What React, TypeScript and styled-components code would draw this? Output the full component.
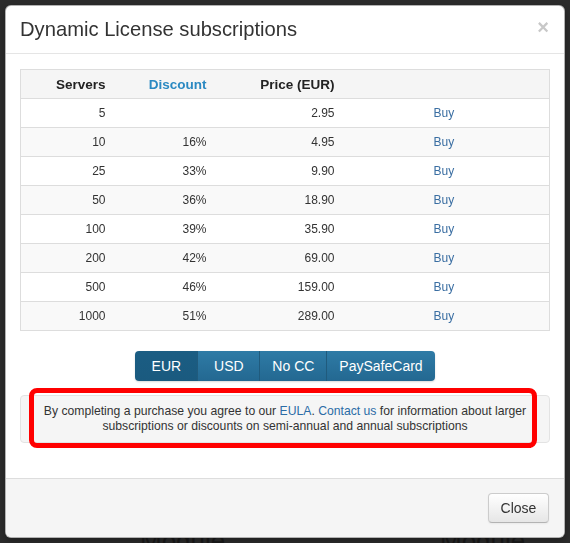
import React from "react";
import styled, { createGlobalStyle, css } from "styled-components";

const GlobalStyle = createGlobalStyle`
  html, body {
    margin: 0;
    padding: 0;
    background: #2c2c2c;
    font-family: "Liberation Sans", Arial, Helvetica, sans-serif;
  }
  * { box-sizing: border-box; }
`;

const Page = styled.div`
  height: 543px;
  overflow: hidden;
  background: #2c2c2c;
  display: flex;
  flex-direction: column;
  justify-content: flex-end;
`;

const BehindRow = styled.div`
  display: flex;
  gap: 170px;
  padding-left: 140px;
  margin-bottom: -14px;
  font-size: 26px;
  color: #1a1a1a;
`;

const Modal = styled.div`
  position: fixed;
  top: 5px;
  left: 5px;
  width: 560px;
  background: #fff;
  border: 1px solid rgba(0, 0, 0, 0.3);
  border-radius: 6px;
  box-shadow: 0 3px 7px rgba(0, 0, 0, 0.3);
  overflow: hidden;
  color: #333;
`;

const Header = styled.div`
  display: flex;
  align-items: center;
  justify-content: space-between;
  padding: 12px 15px 13px 14px;
  border-bottom: 1px solid #e5e5e5;
`;

const Title = styled.h3`
  margin: 0;
  font-size: 20.2px;
  line-height: 22px;
  font-weight: normal;
  color: #333;
`;

const CloseX = styled.span`
  font-size: 20px;
  font-weight: bold;
  line-height: 20px;
  color: #c8c8c8;
  margin-top: -4px;
`;

const Body = styled.div`
  padding: 15px 14px 35px 14px;
  display: flex;
  flex-direction: column;
  align-items: center;
`;

const PriceTable = styled.table`
  width: 530px;
  border-collapse: collapse;
  table-layout: fixed;
  border: 1px solid #ddd;
  font-size: 12px;
  color: #333;

  tbody tr:nth-child(even) td {
    background: #f9f9f9;
  }
`;

const HeadCell = styled.th<{ $link?: boolean }>`
  height: 29px;
  padding: 0 8px;
  background: #f5f5f5;
  font-size: 13.5px;
  font-weight: bold;
  text-align: right;
  color: ${(p) => (p.$link ? "#2a89c2" : "#222")};
`;

const Cell = styled.td<{ $buy?: boolean }>`
  height: 29px;
  padding: 0 8px;
  border-top: 1px solid #ddd;
  background: #fff;
  text-align: right;
  ${(p) =>
    p.$buy &&
    css`
      text-align: left;
      padding-left: 91px;
    `}
`;

const BuyLink = styled.a`
  color: #3a6ea2;
  text-decoration: none;
`;

const CurrencyGroup = styled.div`
  display: flex;
  margin-top: 20px;
  border-radius: 4px;
  overflow: hidden;
  box-shadow: 0 1px 2px rgba(0, 0, 0, 0.15);
`;

const CurrencyButton = styled.button<{ $active?: boolean }>`
  height: 30px;
  min-width: 62px;
  padding: 0 12px;
  border: none;
  border-left: 1px solid #205b7d;
  font-family: inherit;
  font-size: 14px;
  color: #fff;
  background: ${(p) =>
    p.$active
      ? "linear-gradient(#1b5d83, #1a5a7f)"
      : "linear-gradient(#2f7ba6, #236891)"};
  &:first-child {
    border-left: none;
  }
`;

const NoticeWrap = styled.div`
  position: relative;
  width: 530px;
  margin-top: 14px;
`;

const Notice = styled.div`
  background: #f5f5f5;
  border: 1px solid #e3e3e3;
  border-radius: 4px;
  padding: 8px 16px;
  font-size: 12.2px;
  line-height: 15px;
  text-align: center;
  color: #333;
`;

const NoticeLink = styled.a`
  color: #2b6ca6;
  text-decoration: none;
`;

const Highlight = styled.div`
  position: absolute;
  left: 9px;
  right: 13px;
  top: -7px;
  bottom: -5px;
  border: 5px solid #ff0000;
  border-radius: 8px;
  pointer-events: none;
`;

const Footer = styled.div`
  display: flex;
  justify-content: flex-end;
  padding: 14px 15px 14px 15px;
  background: #f5f5f5;
  border-top: 1px solid #ddd;
`;

const CloseButton = styled.button`
  height: 30px;
  width: 61px;
  font-family: inherit;
  font-size: 14px;
  color: #333;
  background: linear-gradient(#ffffff, #e6e6e6);
  border: 1px solid #ccc;
  border-bottom-color: #b3b3b3;
  border-radius: 4px;
  box-shadow: inset 0 1px 0 rgba(255, 255, 255, 0.2), 0 1px 2px rgba(0, 0, 0, 0.05);
`;

const plans: [number, string, string][] = [
  [5, "", "2.95"],
  [10, "16%", "4.95"],
  [25, "33%", "9.90"],
  [50, "36%", "18.90"],
  [100, "39%", "35.90"],
  [200, "42%", "69.00"],
  [500, "46%", "159.00"],
  [1000, "51%", "289.00"],
];

const currencies = ["EUR", "USD", "No CC", "PaySafeCard"];

export default function App() {
  return (
    <>
      <GlobalStyle />
      <Page>
        <BehindRow>
          <span>WHMCS Module</span>
          <span>WHMCS Module</span>
        </BehindRow>
      </Page>
      <Modal>
        <Header>
          <Title>Dynamic License subscriptions</Title>
          <CloseX>×</CloseX>
        </Header>
        <Body>
          <PriceTable>
            <colgroup>
              <col style={{ width: 93 }} />
              <col style={{ width: 101 }} />
              <col style={{ width: 128 }} />
              <col />
            </colgroup>
            <thead>
              <tr>
                <HeadCell>Servers</HeadCell>
                <HeadCell $link>Discount</HeadCell>
                <HeadCell>Price (EUR)</HeadCell>
                <HeadCell />
              </tr>
            </thead>
            <tbody>
              {plans.map(([servers, discount, price]) => (
                <tr key={servers}>
                  <Cell>{servers}</Cell>
                  <Cell>{discount}</Cell>
                  <Cell>{price}</Cell>
                  <Cell $buy>
                    <BuyLink href="#">Buy</BuyLink>
                  </Cell>
                </tr>
              ))}
            </tbody>
          </PriceTable>
          <CurrencyGroup>
            {currencies.map((c) => (
              <CurrencyButton key={c} $active={c === "EUR"}>
                {c}
              </CurrencyButton>
            ))}
          </CurrencyGroup>
          <NoticeWrap>
            <Notice>
              By completing a purchase you agree to our{" "}
              <NoticeLink href="#">EULA</NoticeLink>.{" "}
              <NoticeLink href="#">Contact us</NoticeLink> for information about larger
              subscriptions or discounts on semi-annual and annual subscriptions
            </Notice>
            <Highlight />
          </NoticeWrap>
        </Body>
        <Footer>
          <CloseButton>Close</CloseButton>
        </Footer>
      </Modal>
    </>
  );
}
